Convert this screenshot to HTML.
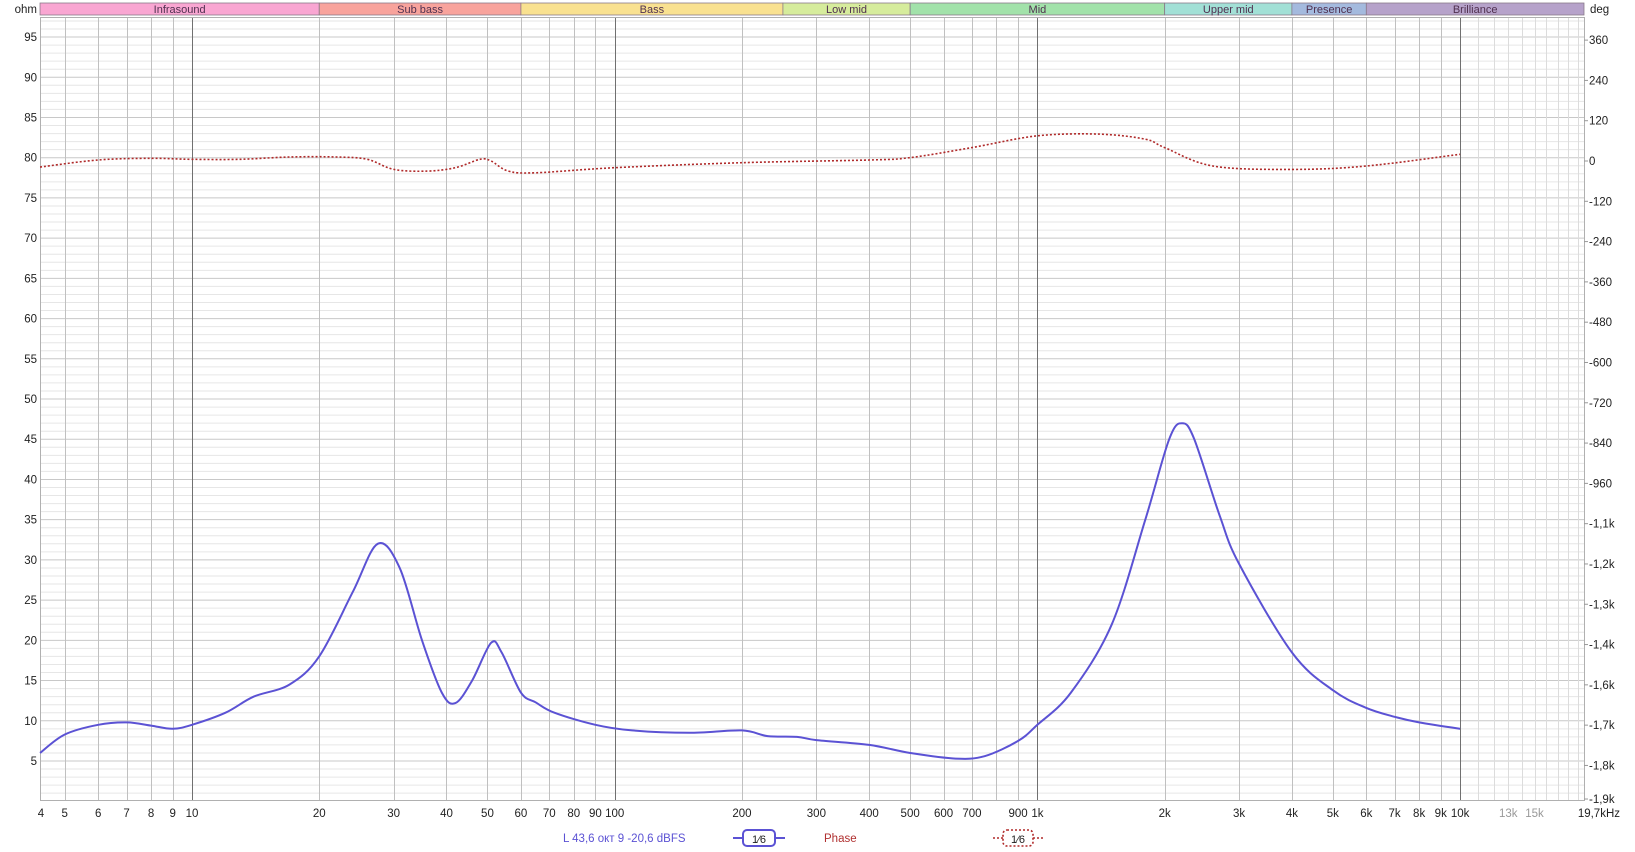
<!DOCTYPE html>
<html><head><meta charset="utf-8"><style>
html,body{margin:0;padding:0;background:#fff;width:1635px;height:852px;overflow:hidden}
svg{display:block;font-family:"Liberation Sans",sans-serif}
</style></head><body>
<svg id="s" width="1635" height="852" xmlns="http://www.w3.org/2000/svg"></svg>
<script>
const S=document.getElementById('s');let h='';
const L=40,R=1584,T=17,B=800;
const X=f=>192+422.7*Math.log10(f/10);
const Y=o=>761-(o-5)*8.044;
const P=d=>161-d*0.3358;
for(let o=1;o<=97;o++){const y=Y(o);if(y<T||y>B)continue;h+=`<line x1="${L}" x2="${R}" y1="${y}" y2="${y}" stroke="${o%5==0?'#c8c8c8':'#e6e6e6'}" stroke-width="1"/>`;}
const fs=[];for(let d of [1,10,100,1000,10000])for(let m=1;m<10;m++){const f=m*d;if(f>=5&&f<=19000)fs.push(f);}
for(let f of [11000,12000,13000,14000,15000,16000,17000,18000,19000])if(!fs.includes(f))fs.push(f);
for(const f of fs){let x=X(f);if(x<L||x>R)continue;x=Math.round(x)+.5;let c=(f==10||f==100||f==1000||f==10000)?'#707070':(f>10000?'#dcdcdc':'#c0c0c0');h+=`<line x1="${x}" x2="${x}" y1="${T}" y2="${B}" stroke="${c}"/>`;}
h+=`<rect x="${L}.5" y="${T}.5" width="${R-L}" height="${B-T}" fill="none" stroke="#b0b0b0"/>`;
const bands=[[4.37,20,'Infrasound','#f9a6d2'],[20,60,'Sub bass','#f8a39c'],[60,250,'Bass','#f9e190'],[250,500,'Low mid','#d6ec9c'],[500,2000,'Mid','#a2e2aa'],[2000,4000,'Upper mid','#a2e0d6'],[4000,6000,'Presence','#a4bade'],[6000,19700,'Brilliance','#b6a2ca']];
for(const [a,b,t,c] of bands){const x1=Math.max(L,X(a)),x2=Math.min(R,X(b));h+=`<rect x="${x1}" y="3" width="${x2-x1}" height="12" fill="${c}" stroke="#8a7a8a" stroke-width="0.8"/><text x="${(x1+x2)/2}" y="13" font-size="11" text-anchor="middle" fill="#503050">${t}</text>`;}
h+=`<text x="37" y="13" font-size="11.5" text-anchor="end" fill="#222">ohm</text><text x="1590" y="13" font-size="11.5" fill="#222">deg</text>`;
for(let o=5;o<=95;o+=5)h+=`<text x="37" y="${Y(o)+4}" font-size="11.5" text-anchor="end" fill="#222">${o}</text>`;
const pl=[[360,'360'],[240,'240'],[120,'120'],[0,'0'],[-120,'-120'],[-240,'-240'],[-360,'-360'],[-480,'-480'],[-600,'-600'],[-720,'-720'],[-840,'-840'],[-960,'-960'],[-1080,'-1,1k'],[-1200,'-1,2k'],[-1320,'-1,3k'],[-1440,'-1,4k'],[-1560,'-1,6k'],[-1680,'-1,7k'],[-1800,'-1,8k'],[-1900,'-1,9k']];
for(const [d,t] of pl){const y=P(d);h+=`<line x1="${R}" x2="${R+4}" y1="${y}" y2="${y}" stroke="#999"/><text x="${R+5}" y="${y+4}" font-size="11.5" fill="#222">${t}</text>`;}
const bl=[[5,'5'],[6,'6'],[7,'7'],[8,'8'],[9,'9'],[10,'10'],[20,'20'],[30,'30'],[40,'40'],[50,'50'],[60,'60'],[70,'70'],[80,'80'],[90,'90'],[100,'100'],[200,'200'],[300,'300'],[400,'400'],[500,'500'],[600,'600'],[700,'700'],[900,'900'],[1000,'1k'],[2000,'2k'],[3000,'3k'],[4000,'4k'],[5000,'5k'],[6000,'6k'],[7000,'7k'],[8000,'8k'],[9000,'9k'],[10000,'10k']];
h+=`<text x="41" y="817" font-size="11.5" text-anchor="middle" fill="#222">4</text>`;
for(const [f,t] of bl)h+=`<text x="${X(f)}" y="817" font-size="11.5" text-anchor="middle" fill="#222">${t}</text>`;
h+=`<text x="${X(13000)}" y="817" font-size="11.5" text-anchor="middle" fill="#999">13k</text><text x="${X(15000)}" y="817" font-size="11.5" text-anchor="middle" fill="#999">15k</text><text x="1620" y="817" font-size="11.5" text-anchor="end" fill="#222">19,7kHz</text>`;
function path(pts){const p=pts;let d=`M${p[0][0]},${p[0][1]}`;for(let i=0;i<p.length-1;i++){const p0=p[i-1]||p[i],p1=p[i],p2=p[i+1],p3=p[i+2]||p2;const c1=[p1[0]+(p2[0]-p0[0])/6,p1[1]+(p2[1]-p0[1])/6],c2=[p2[0]-(p3[0]-p1[0])/6,p2[1]-(p3[1]-p1[1])/6];d+=`C${c1[0].toFixed(1)},${c1[1].toFixed(1)} ${c2[0].toFixed(1)},${c2[1].toFixed(1)} ${p2[0].toFixed(1)},${p2[1].toFixed(1)}`;}return d;}
const imp=[[4.37,6],[5,8.3],[6,9.5],[7,9.8],[8,9.4],[9,9.0],[10,9.5],[12,11],[14,13],[17,14.5],[20,18],[24,26],[27.5,32],[31,29],[35,20],[39,13.5],[42,12.2],[46,15],[51,19.7],[54,18.5],[60,13.5],[65,12.3],[72,11],[90,9.5],[110,8.8],[150,8.5],[200,8.8],[230,8.1],[270,8.0],[300,7.6],[400,7],[500,6],[640,5.3],[750,5.6],[900,7.5],[1000,9.5],[1200,13.5],[1500,22],[1800,35],[2050,45],[2200,47],[2350,45],[2700,35.5],[3000,29.5],[4000,18.5],[5000,13.8],[6000,11.6],[7000,10.5],[8000,9.8],[10000,9]];
const ph=[[4.37,-18],[6,3],[8,8],[10,5],[13,5],[17,12],[22,12],[26,5],[30,-25],[36,-30],[42,-20],[48,5],[51,0],[56,-30],[65,-35],[100,-20],[200,-5],[400,3],[500,10],[700,40],[1000,75],[1400,80],[1800,65],[2000,40],[2600,-15],[4000,-25],[6000,-15],[10000,20]];
h+=`<path d="${path(ph.map(([f,d])=>[X(f),P(d)]))}" fill="none" stroke="#b02a2a" stroke-width="1.6" stroke-dasharray="2 2"/>`;
h+=`<path d="${path(imp.map(([f,o])=>[X(f),Y(o)]))}" fill="none" stroke="#5b52d4" stroke-width="2"/>`;
h+=`<text x="563" y="842" font-size="11.5" fill="#5b52d4">L 43,6 окт 9 -20,6 dBFS</text>`;
h+=`<line x1="733" x2="785" y1="838" y2="838" stroke="#5b52d4" stroke-width="2"/><rect x="743" y="830" width="32" height="16" rx="4" fill="#fff" stroke="#5b52d4" stroke-width="2"/><text x="759" y="843" font-size="11" text-anchor="middle" fill="#222">1⁄6</text>`;
h+=`<text x="824" y="842" font-size="11.5" fill="#b03030">Phase</text>`;
h+=`<line x1="993" x2="1043" y1="838" y2="838" stroke="#b02a2a" stroke-width="1.6" stroke-dasharray="2 2"/><rect x="1003" y="830" width="30" height="16" rx="4" fill="#fff" stroke="#b02a2a" stroke-width="1.6" stroke-dasharray="2 2"/><text x="1018" y="843" font-size="11" text-anchor="middle" fill="#222">1⁄6</text>`;
S.innerHTML=h;
</script>
</body></html>
